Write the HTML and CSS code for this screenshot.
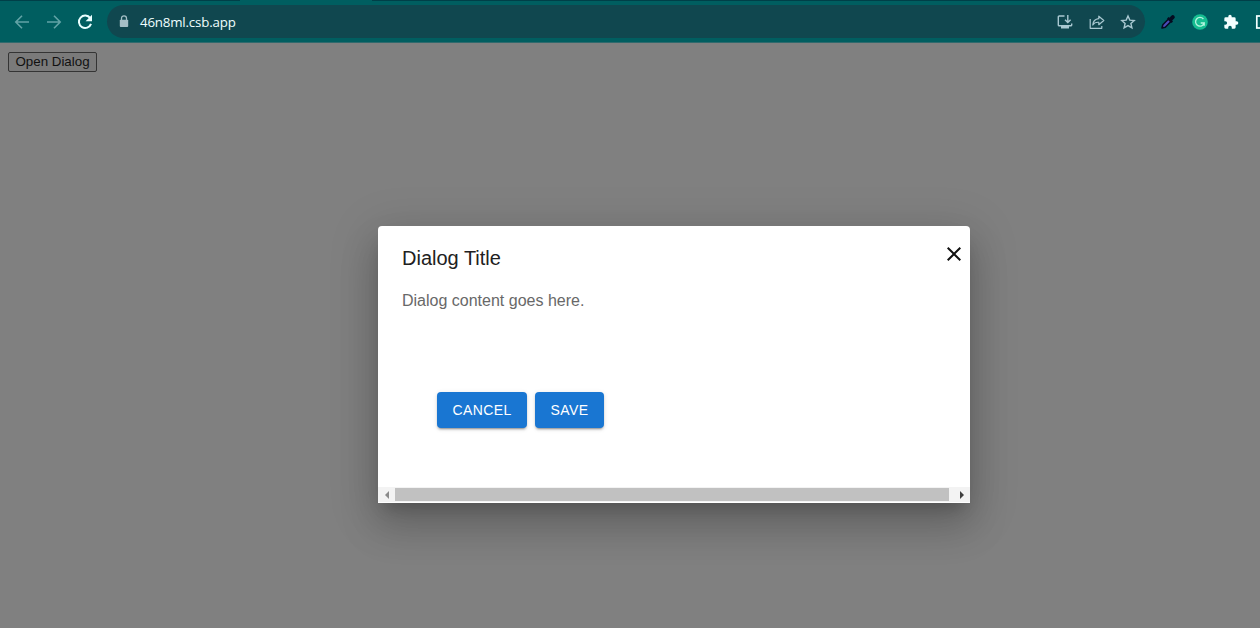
FILE: index.html
```
<!DOCTYPE html>
<html lang="en">
<head>
<meta charset="utf-8">
<title>Dialog</title>
<link rel="stylesheet" href="styles.css">
</head>
<body>
<div class="window">
  <header class="toolbar">
    <nav class="nav">
      <svg class="faded" width="16" height="16" viewBox="0 0 16 16"><path d="M15 8H2M8 1.7 1.8 8 8 14.3" fill="none" stroke="currentColor" stroke-width="1.6"/></svg>
      <svg class="faded" width="16" height="16" viewBox="0 0 16 16"><path d="M1 8h13M8 1.7 14.2 8 8 14.3" fill="none" stroke="currentColor" stroke-width="1.6"/></svg>
      <svg width="16" height="16" viewBox="0 0 16 16"><path d="M13.2 4.2A6.2 6.2 0 1 0 14 9.8" fill="none" stroke="currentColor" stroke-width="2"/><path d="M15 .8v6.4H8.6z" fill="currentColor"/></svg>
    </nav>
    <div class="address">
      <svg class="lock" width="10" height="13" viewBox="0 0 10 13"><path d="M2.5 5V3.3a2.5 2.5 0 0 1 5 0V5" fill="none" stroke="currentColor" stroke-width="1.3"/><rect x=".8" y="4.7" width="8.4" height="7.3" rx=".9" fill="currentColor"/></svg>
      <span class="url">46n8ml.csb.app</span>
      <div class="actions">
        <svg width="16" height="16" viewBox="0 0 16 16"><path d="M7.5 2H2.2q-.9 0-.9.9v8q0 .9.9.9h11.600q.9 0 .9-.9V9.500M10.800 1v7M8 5.800l2.800 2.800 2.800-2.800" fill="none" stroke="currentColor" stroke-width="1.4"/><path d="M4 12h8v2.500H4z" fill="currentColor"/></svg>
        <svg width="16" height="16" viewBox="0 0 16 16"><path d="M1.200 5v9.300h11.600V12M9.800 2.200l5 4.300-5 4.200V8.300Q5.500 8 3.800 11q.4-5.800 6-6.300z" fill="none" stroke="currentColor" stroke-width="1.2" stroke-linejoin="round"/></svg>
        <svg width="16" height="16" viewBox="0 0 16 16"><path d="m8 2 1.800 4.100 4.400.4-3.300 3 1 4.400L8 11.600l-3.900 2.300 1-4.400-3.300-3 4.400-.4z" fill="none" stroke="currentColor" stroke-width="1.4"/></svg>
      </div>
    </div>
    <div class="extensions">
      <svg width="16" height="16" viewBox="0 0 16 16"><path d="m2 14 .8-3.300L9 4.500 11.500 7l-6.200 6.200z" fill="#4b49b8" stroke="#050b20" stroke-width="1.500" stroke-linejoin="round"/><path d="m7.800 3.800 4.500 4.500" stroke="#050b20" stroke-width="2"/><path d="m10.300 5.700 2.500-2.500" stroke="#050b20" stroke-width="4" stroke-linecap="round"/></svg>
      <svg width="16" height="16" viewBox="0 0 16 16"><circle cx="8" cy="8" r="7.800" fill="#16bd91"/><path d="M11.400 5A4.400 4.400 0 1 0 12.200 9H8.700M12.200 8.300v3.400" fill="none" stroke="#b5f5df" stroke-width="1.300"/></svg>
      <svg width="16" height="16" viewBox="0 0 24 24"><path d="M20.500 11H19V7a2 2 0 0 0-2-2h-4V3.500a2.500 2.500 0 0 0-5 0V5H4a2 2 0 0 0-2 2v3.800h1.500a2.700 2.700 0 0 1 0 5.400H2V20a2 2 0 0 0 2 2h3.800v-1.500a2.700 2.700 0 0 1 5.400 0V22H17a2 2 0 0 0 2-2v-4h1.500a2.500 2.500 0 0 0 0-5z" fill="#f4ffff"/></svg>
      <svg width="16" height="16" viewBox="0 0 16 16"><rect x="1.800" y="2" width="12.400" height="12" fill="none" stroke="#f4ffff" stroke-width="1.700"/></svg>
    </div>
  </header>
  <main class="page">
    <button class="open">Open Dialog</button>
    <section class="dialog" role="dialog" aria-label="Dialog Title">
      <div class="dialog-body">
        <div class="dialog-head">
          <h2 class="title">Dialog Title</h2>
          <svg class="close" width="24" height="24" viewBox="0 0 24 24"><path d="M19 6.410 17.590 5 12 10.590 6.410 5 5 6.410 10.590 12 5 17.590 6.410 19 12 13.410 17.590 19 19 17.590 13.410 12z" fill="currentColor"/></svg>
        </div>
        <p class="text">Dialog content goes here.</p>
        <div class="buttons">
          <button class="btn cancel">CANCEL</button>
          <button class="btn save">SAVE</button>
        </div>
      </div>
      <div class="scrollbar">
        <span class="arrow left"></span>
        <span class="thumb"></span>
        <span class="arrow right"></span>
      </div>
    </section>
  </main>
</div>
</body>
</html>
```
FILE: styles.css
```
* { box-sizing: border-box; }
body { margin: 0; font-family: "Liberation Sans", Arial, sans-serif; }
svg { display: block; flex: none; }
.window { width: 1260px; height: 628px; overflow: hidden; display: flex; flex-direction: column; background: #808080; }
.toolbar {
  height: 43px; flex: none; display: flex; align-items: center; padding: 1px 0 0 14px;
  background:
    linear-gradient(#003f48, #003f48) 0 0 / 240px 1px no-repeat,
    linear-gradient(#003f48, #003f48) 372px 0 / 888px 1px no-repeat,
    #005e60;
  border-bottom: 1px solid #2f6a6d;
}
.nav { width: 93px; flex: none; display: flex; gap: 15.500px; color: #e9ffff; }
.faded { color: #62a3a6; }
.address { width: 1038px; flex: none; height: 33px; border-radius: 17px; background: #10474f; display: flex; align-items: center; padding: 0 9px 0 12px; }
.lock { color: #a5bfc6; }
.url { margin-left: 11px; font: 13.300px/20px "Open Sans", "Noto Sans", sans-serif; letter-spacing: -.18px; color: #f0ffff; }
.actions { margin-left: auto; display: flex; gap: 15.500px; color: #a9c8d1; }
.extensions { flex: none; display: flex; gap: 15.500px; margin-left: 15px; }
.page { flex: 1; display: flex; flex-direction: column; padding: 9px 0 0 8px; }
.open { width: 89px; height: 20px; padding: 0; border: 1px solid #343434; border-radius: 2px; background: #7a7a7a; color: #111; font: 13.333px/18px "Liberation Sans", Arial, sans-serif; white-space: nowrap; }
.dialog {
  width: 592px; height: 277px; margin: 154px 0 0 370px; display: flex; flex-direction: column;
  background: #fff; border-radius: 4px 4px 0 0; color: #212121;
  box-shadow: 0 11px 15px -7px rgba(0,0,0,.2), 0 24px 38px 3px rgba(0,0,0,.14), 0 9px 46px 8px rgba(0,0,0,.12);
}
.dialog-body { flex: 1; padding: 16px 4px 0 24px; }
.dialog-head { display: flex; justify-content: space-between; height: 48px; }
.title { margin: 0; font-size: 20px; line-height: 32px; font-weight: 400; }
.close { color: #111; }
.text { margin: 0; font-size: 16px; line-height: 22px; color: #686868; }
.buttons { display: flex; gap: 8px; margin: 80px 0 0 35px; }
.btn { height: 36px; padding: 0; border: 0; border-radius: 4px; background: #1976d2; color: #fff; font: 14px/24px "Liberation Sans", Arial, sans-serif; letter-spacing: .4px; box-shadow: 0 3px 1px -2px rgba(0,0,0,.2), 0 2px 2px rgba(0,0,0,.14), 0 1px 5px rgba(0,0,0,.12); }
.cancel { width: 90px; }
.save { width: 69px; }
.scrollbar { height: 16px; display: flex; align-items: center; background: #f3f3f3; border-bottom: 1px solid #fff; }
.thumb { width: 554px; height: 13px; background: #c1c1c1; }
.arrow { display: flex; align-items: center; justify-content: center; width: 17px; }
.arrow.right { width: 21px; padding-left: 5px; }
.arrow::before { content: ""; border: 4px solid transparent; }
.left::before { border-left-width: 0; border-right-color: #8b8b8b; }
.right::before { border-right-width: 0; border-left-color: #404040; }
```
